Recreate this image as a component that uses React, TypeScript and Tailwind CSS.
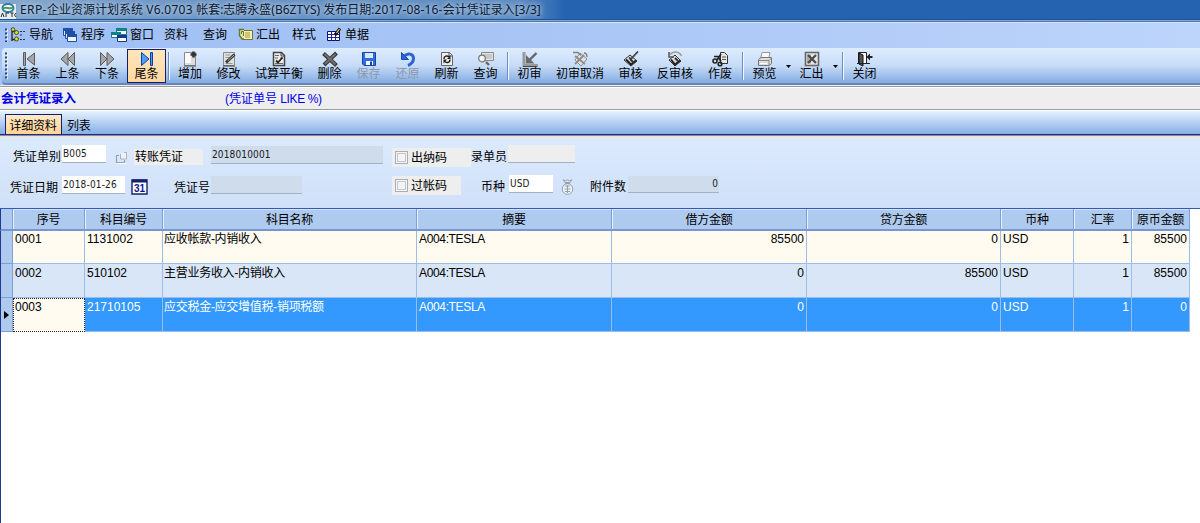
import React from "react";
import clsx from "clsx";

const icons: Record<string, React.ReactNode> = {
  first: (
    <g fill="#a6a6a6" stroke="#5a5a5a">
      <path d="M2.5 1.500h2v13h-2z" />
      <path d="M13.500 2v12L6 8z" />
    </g>
  ),
  prev: (
    <g fill="#a6a6a6" stroke="#5a5a5a">
      <path d="M8 1.500v13L1 8z" />
      <path d="M14.500 1.500v13L8 8z" />
    </g>
  ),
  next: (
    <g fill="#a6a6a6" stroke="#5a5a5a">
      <path d="M1.500 1.500v13L8 8z" />
      <path d="M8 1.500v13L15 8z" />
    </g>
  ),
  last: (
    <g fill="#4d9bff" stroke="#0a3fa8">
      <path d="M2.500 1.500v13L10 8z" />
      <path d="M11.500 1.500h2v13h-2z" />
    </g>
  ),
  add: (
    <g>
      <path d="M2.500 1.500h11v13h-11z" fill="#dcdcdc" stroke="#8a8a8a" />
      <path d="M3 2h6v10H3z" fill="#fafafa" />
      <path d="M2 15h12" stroke="#555" />
      <path d="M11.500 .5v6M8.500 3.500h6" stroke="#333" strokeWidth="2.600" />
    </g>
  ),
  edit: (
    <g>
      <path d="M2.500 1.500h11v13h-11z" fill="#e0e0e0" stroke="#8a8a8a" />
      <path d="M4.500 4h5M4.500 6.500h4M4.500 12.500h7" stroke="#999" />
      <path d="M5 11.500 13.500 3.500" stroke="#3a3a3a" strokeWidth="3" />
      <path d="M7 9.500 13 4" stroke="#aaa" />
      <path d="M2 15h12" stroke="#444" />
    </g>
  ),
  check: (
    <g>
      <path d="M2.500 1.500h8l3 3v10h-11z" fill="#ececec" stroke="#444" strokeWidth="1.500" />
      <path d="M10 1v4h4" fill="none" stroke="#444" />
      <path d="M4 4.500h4M4 7h3M9 7h3M4 12.500h8" stroke="#666" />
      <path d="m5 9.500 2 2 4.500-5" fill="none" stroke="#222" strokeWidth="1.800" />
    </g>
  ),
  remove: (
    <g>
      <path d="m1.500 2.500 13 12M14.500 2 2 14" stroke="#3a3a3a" strokeWidth="4" />
      <path d="m2.500 3 11 10.500M13.500 3 3 13" stroke="#707070" strokeWidth="1.800" />
    </g>
  ),
  save: (
    <g>
      <path d="M1.500 1.500h13v13H3l-1.500-1.500z" fill="#2d6ddf" stroke="#1745a5" />
      <path d="M4 2h8v5H4z" fill="#d9e8fb" />
      <path d="M5 10h7v4H5z" fill="#f5f9ff" />
      <path d="M9 10.500h2V14H9z" fill="#1745a5" />
    </g>
  ),
  undo: (
    <g fill="none" stroke="#2b63d2">
      <path d="M4 5.500C8 1 13.500 3 13.500 7.500c0 3-2 5.500-5.500 7" strokeWidth="3" />
      <path d="M1.500 1.500v7h7z" fill="#2b63d2" stroke="#1b4db5" />
    </g>
  ),
  refresh: (
    <g>
      <path d="M2.500 1.500h8l3 3v10h-11z" fill="#eee" stroke="#666" />
      <path d="M10 1.500v3.500h3.500" fill="none" stroke="#555" />
      <path d="M5 8c0-3 3-4 5-2M11 8.500c0 3-3 4-5 2" fill="none" stroke="#222" strokeWidth="1.500" />
      <path d="M11.500 4v4H8zM4.500 12.500v-4H8z" fill="#222" />
    </g>
  ),
  search: (
    <g>
      <path d="M3.500 1.500h12v8h-12z" fill="#e4e4e4" stroke="#888" />
      <path d="M5 3h9v5H5z" fill="#c8c8c8" />
      <circle cx="4" cy="7.500" r="3.300" fill="#f5f5f5" stroke="#777" strokeWidth="1.200" />
      <path d="m8 11 3 3" stroke="#666" strokeWidth="2.400" />
    </g>
  ),
  audit: (
    <g>
      <path d="M2 1v13.500h14" fill="none" stroke="#9a9a9a" strokeWidth="3" />
      <path d="m14.500 2-8 8" stroke="#666" strokeWidth="2.400" />
      <path d="M4 4v8.500h8.500z" fill="#6a6a6a" />
      <path d="M1 15.500h14" stroke="#444" />
    </g>
  ),
  auditCancel: (
    <g>
      <path d="m3 9 5-7 7 6-6 7z" fill="#e2e2e2" stroke="#8a8a8a" />
      <path d="M1 1.500h5l3 3M12 2c2 0 3 2 3 4" stroke="#808080" strokeWidth="1.400" />
      <path d="M3 5 13 13M12 4 3 13" stroke="#8c8c8c" strokeWidth="1.800" />
    </g>
  ),
  stamp: (
    <g>
      <path d="m1 9 6-5 7 6-6 5z" fill="#ddd" stroke="#333" />
      <path d="m3 8.500 5 5 5-4" fill="none" stroke="#222" strokeWidth="2" />
      <path d="M15 .500 8 8 6 6.500" fill="none" stroke="#444" strokeWidth="1.800" />
      <path d="m7 8 3 3" stroke="#333" strokeWidth="2" />
    </g>
  ),
  unstamp: (
    <g>
      <path d="m2 9 6-5 6 6-6 5z" fill="#ddd" stroke="#333" />
      <path d="m4 8.500 4 5 5-4" fill="none" stroke="#222" strokeWidth="2" />
      <path d="M3 3.500C6 0 12 0 14.500 5" fill="none" stroke="#999" strokeWidth="1.500" />
      <path d="M2 1v5h5" fill="none" stroke="#555" strokeWidth="1.500" />
      <path d="m8 7 3 3" stroke="#333" strokeWidth="2" />
    </g>
  ),
  discard: (
    <g>
      <path d="M8.500 1.500h4l3 3v8h-7z" fill="#e5e5e5" stroke="#333" />
      <path d="M10 6h4M10 8.500h4" stroke="#555" />
      <circle cx="3" cy="10" r="2" fill="none" stroke="#222" strokeWidth="1.600" />
      <circle cx="8" cy="13" r="1.800" fill="none" stroke="#222" strokeWidth="1.600" />
      <path d="M2 5.500h4l3 5M5 9l4-6" stroke="#222" strokeWidth="1.600" />
    </g>
  ),
  print: (
    <g>
      <path d="M5 1.500h8L11.500 8H3.500z" fill="#fafafa" stroke="#999" />
      <path d="m1.500 8.500 2.500-2h10.500v6L12 14.500H1.500z" fill="#ddd" stroke="#777" />
      <path d="M1.500 9.500H12v5M12 9.500l2.500-2.500" fill="none" stroke="#888" />
      <path d="M3 12.500h7" stroke="#fff" />
    </g>
  ),
  sheet: (
    <g>
      <path d="M1.500 1.500h13v13h-13z" fill="#e5e5e5" stroke="#666" strokeWidth="1.600" />
      <path d="M3 3.500h4v9H3z" fill="#aaa" />
      <path d="m4 4 8 8M12 4 4 12" stroke="#4a4a4a" strokeWidth="2.200" />
    </g>
  ),
  exit: (
    <g>
      <path d="M1.500 1.500h8v11h-8z" fill="#fff" stroke="#222" />
      <path d="m2 2 4 2v11l-4-2z" fill="#555" stroke="#111" />
      <path d="M0 12.500h13" stroke="#222" />
      <path d="M15.500 6h-4" stroke="#222" strokeWidth="2" />
      <path d="M9.500 6 13 2.500v7z" fill="#222" />
    </g>
  ),
  tree: (
    <g>
      <path d="M2 1v13M2 4.500h4M2 12.500h4" stroke="#222" strokeWidth="1.300" />
      <path d="M10 4.500h5M10 8h3M10 12.500h5" stroke="#333" strokeDasharray="2 1" />
      <g fill="#d3e02c" stroke="#3c4416" strokeWidth=".9">
        <circle cx="3" cy="2.500" r="1.800" />
        <circle cx="6.500" cy="5.500" r="2" />
        <circle cx="6.500" cy="12" r="2" />
      </g>
    </g>
  ),
  windows: (
    <g stroke="#1f50a5">
      <path d="M1.500 1.500h9v7h-9z" fill="#d8e8fb" />
      <path d="M1 2.500h10" strokeWidth="3" />
      <path d="M3.500 4.500h9v7h-9z" fill="#d8e8fb" />
      <path d="M3 5.500h10" strokeWidth="3" />
      <path d="M5.500 7.500h9v7h-9z" fill="#eef5ff" />
      <path d="M5 8.500h10" strokeWidth="3" />
    </g>
  ),
  cascade: (
    <g>
      <path d="M5.500 1.500h10v6h-10z" fill="#fff" stroke="#147d83" />
      <path d="M5 2.500h11" stroke="#0c8288" strokeWidth="3" />
      <path d="M.5 5.500h9v5h-9z" fill="#fff" stroke="#147d83" />
      <path d="M0 6.500h10" stroke="#0c8288" strokeWidth="3" />
      <path d="M6.500 8.500h9v6h-9z" fill="#fff" stroke="#153c8b" />
      <path d="M6 9.500h10" stroke="#153c8b" strokeWidth="3" />
    </g>
  ),
  exportNote: (
    <g>
      <path d="M5.500 3.500h10v9h-10z" fill="#f5efa8" stroke="#77733b" />
      <path d="M8 6h5M8 8h5M8 10h5" stroke="#a49d4c" />
      <path d="M7 2.500H2.500v6L5 12h2" fill="#dce8a0" stroke="#6c7434" strokeWidth="1.400" />
      <path d="M4.500 7V4.500h2V9" fill="none" stroke="#6c7434" />
    </g>
  ),
  gridPen: (
    <g>
      <path d="M1.500 4.500h12v9h-12z" fill="#fff" stroke="#11116b" />
      <path d="M1 7.500h13M1 10.500h13M5.500 4v10M9.500 4v10" stroke="#20209a" />
      <path d="M9 8 14 1.500" stroke="#111" strokeWidth="3" />
      <path d="m10.500 6 3-4" stroke="#e8d550" strokeWidth="1.200" />
    </g>
  ),
};

const Icon = ({ name, className = "size-4" }: { name: string; className?: string }) => (
  <svg viewBox="0 0 16 16" className={clsx("shrink-0", className)} fill="none">
    {icons[name]}
  </svg>
);

const Grip = ({ className }: { className: string }) => (
  <svg viewBox="0 0 3 30" className={clsx("w-[3px] shrink-0", className)} preserveAspectRatio="xMidYMin slice">
    <path d="M2 1.500v29" stroke="#fff" strokeWidth="2" strokeDasharray="2 2" />
    <path d="M1 .5v29" stroke="#27417d" strokeWidth="2" strokeDasharray="2 2" />
  </svg>
);

const TitleBar = () => (
  <div className="flex h-[19px] shrink-0 items-center bg-[linear-gradient(90deg,#86a9cc_0,#7299c6_120px,#6590c2_350px,#5f8dc1_520px,#2563b1_565px,#2563b1_100%)] font-['Noto_Sans','Noto_Sans_CJK_SC',sans-serif]">
    <svg viewBox="0 0 17 18" className="h-[18px] w-[17px] shrink-0">
      <path d="M0 3h16v15H0z" fill="#e6eef2" />
      <ellipse cx="8" cy="7" rx="5.500" ry="4" fill="#fff" stroke="#2f7fae" strokeWidth="2" />
      <path d="M3 8c3-4 7 2 10-2" fill="none" stroke="#4c9a54" strokeWidth="2" />
      <path d="M1 16l1.500-4L4 16M6 12v4M6 12h3M10.500 12h3M12 12v4M16 12l-1.500 2 1.500 2" fill="none" stroke="#333" />
    </svg>
    <span className="ml-[3px] whitespace-pre text-[12px] leading-[18px] text-[#0b1a33] [text-shadow:0_0_4px_#c5d8ec,0_0_6px_#b4cce6]">
      <span className="tracking-[0.4px]">ERP-</span>企业资源计划系统
      <span className="tracking-[0.25px]"> V6.0703 </span>帐套:志腾永盛
      <span>(B6ZTYS) </span>发布日期:<span className="tracking-[0.15px]">2017-08-16-</span>会计凭证录入
      <span>[3/3]</span>
    </span>
  </div>
);

const menus = [
  { label: "导航", icon: "tree", box: "w-[52px]" },
  { label: "程序", icon: "windows", box: "w-[49px]" },
  { label: "窗口", icon: "cascade", box: "w-[53px]" },
  { label: "资料", box: "w-[39px]" },
  { label: "查询", box: "w-[34px]" },
  { label: "汇出", icon: "exportNote", box: "w-[55px]" },
  { label: "样式", box: "w-[34px]" },
  { label: "单据", icon: "gridPen", box: "w-[44px]" },
];

const MenuBar = () => (
  <div className="flex h-[25px] shrink-0 items-center bg-[linear-gradient(90deg,#9fbff5,#a8c5f5_45%,#bdd5fb)] pb-px pl-[5px] text-[12px]">
    <Grip className="h-[14px]" />
    <div className="ml-[2px] flex">
      {menus.map((m) => (
        <div key={m.label} className={clsx("flex shrink-0 items-center gap-[3px]", m.box)}>
          {m.icon && <Icon name={m.icon} className="size-[16px]" />}
          <span>{m.label}</span>
        </div>
      ))}
    </div>
  </div>
);

type Tool = {
  label?: string;
  icon?: string;
  box: string;
  disabled?: boolean;
  active?: boolean;
  kind?: "sep" | "arrow";
};

const tools: Tool[] = [
  { label: "首条", icon: "first", box: "w-[39px]" },
  { label: "上条", icon: "prev", box: "w-[39px]" },
  { label: "下条", icon: "next", box: "w-[40px]" },
  { label: "尾条", icon: "last", box: "w-[39px]", active: true },
  { kind: "sep", box: "w-[5px]" },
  { label: "增加", icon: "add", box: "w-[38px]" },
  { label: "修改", icon: "edit", box: "w-[39px]" },
  { label: "试算平衡", icon: "check", box: "w-[62px]" },
  { label: "删除", icon: "remove", box: "w-[39px]" },
  { label: "保存", icon: "save", box: "w-[39px]", disabled: true },
  { label: "还原", icon: "undo", box: "w-[39px]", disabled: true },
  { label: "刷新", icon: "refresh", box: "w-[39px]" },
  { label: "查询", icon: "search", box: "w-[39px]" },
  { kind: "sep", box: "w-[5px]" },
  { label: "初审", icon: "audit", box: "w-[39px]" },
  { label: "初审取消", icon: "auditCancel", box: "w-[62px]" },
  { label: "审核", icon: "stamp", box: "w-[39px]" },
  { label: "反审核", icon: "unstamp", box: "w-[50px]" },
  { label: "作废", icon: "discard", box: "w-[40px]" },
  { kind: "sep", box: "w-[5px]" },
  { label: "预览", icon: "print", box: "w-[39px]" },
  { kind: "arrow", box: "w-[8px]" },
  { label: "汇出", icon: "sheet", box: "w-[39px]" },
  { kind: "arrow", box: "w-[9px]" },
  { kind: "sep", box: "w-[5px]" },
  { label: "关闭", icon: "exit", box: "w-[39px]" },
];

const ToolItem = ({ tool }: { tool: Tool }) => {
  if (tool.kind === "sep") {
    return (
      <div className={clsx("flex shrink-0 justify-center pt-[3px]", tool.box)}>
        <div className="h-7 w-px bg-[#6a8ccb]" />
        <div className="h-7 w-px bg-[#f4f9ff]" />
      </div>
    );
  }
  if (tool.kind === "arrow") {
    return (
      <div className={clsx("flex shrink-0 justify-center pt-4", tool.box)}>
        <svg viewBox="0 0 5 3" className="h-[3px] w-[5px]">
          <path d="M0 0h5L2.500 3z" fill="#000" />
        </svg>
      </div>
    );
  }
  return (
    <div
      className={clsx(
        "flex h-[34px] shrink-0 flex-col items-center border pt-px",
        tool.box,
        tool.active ? "border-[#10206f] bg-linear-to-b from-[#ffe6bd] to-[#ffd7a0]" : "border-transparent",
      )}
    >
      <Icon name={tool.icon!} />
      <span className={clsx("whitespace-nowrap leading-[15px]", tool.disabled && "text-[#8e99ab]")}>{tool.label}</span>
    </div>
  );
};

const ToolBar = () => (
  <div className="h-[37px] shrink-0 bg-[#a5c3f3] pl-[2px]">
    <div className="flex h-full rounded-l border-b-2 border-[#6b84be] bg-linear-to-b from-[#deecff] via-[#c7dcf7] via-50% to-[#83ace2] pl-[3px] pt-px text-[12px]">
      <Grip className="mt-[3px] h-[27px]" />
      <div className="ml-px flex">
        {tools.map((t, i) => (
          <ToolItem key={i} tool={t} />
        ))}
      </div>
    </div>
  </div>
);

const InfoBar = () => (
  <div className="flex h-[24px] shrink-0 items-center border-y border-[#9a9a9a] bg-[#eeeeee] pt-[2px] text-[12px] text-[#0000e8] shadow-[inset_0_1px_0_#fff]">
    <span className="w-[225px] pl-px text-[12.5px] font-bold">会计凭证录入</span>
    <span>
      (凭证单号 <span className="tracking-[-0.4px]">LIKE %)</span>
    </span>
  </div>
);

const TabStrip = () => (
  <div className="flex h-[24px] shrink-0 items-end border-b border-[#1d2c7c] bg-linear-to-b from-[#e6f2fe] to-[#86aee5] pl-[5px] text-[12px]">
    <div className="flex h-[20px] w-[57px] items-center justify-center border border-b-0 border-[#10206f] bg-linear-to-b from-[#ffe9c6] to-[#ffd394] pr-px pt-[2px]">
      <span className="tracking-[-0.3px]">详细资料</span>
    </div>
    <div className="flex h-[20px] items-center pl-[5px] pt-[3px] tracking-[-0.3px]">列表</div>
  </div>
);

const Field = ({ className, value, plain }: { className: string; value?: string; plain?: boolean }) => (
  <div
    className={clsx(
      "h-[18px] shrink-0 border-b border-[#a3b1c4] px-px font-['DejaVu_Sans_Condensed','Liberation_Sans',sans-serif] text-[10px] leading-[17px] tracking-[0.15px] text-[#1a1a1a]",
      plain ? "bg-white" : "bg-[#cfdcec]",
      className,
    )}
  >
    {value}
  </div>
);

const CheckPanel = ({ label, className }: { label: string; className: string }) => (
  <div className={clsx("flex h-[19px] shrink-0 items-center bg-[#eeeeee] pl-[3px]", className)}>
    <div className="flex size-[13px] items-center justify-center border border-[#a9aeb8] bg-[#f4f4f4]">
      <div className="size-[9px] border border-[#c3c7ce]" />
    </div>
    <span className="ml-[3px] pt-px">{label}</span>
  </div>
);

const CalendarIcon = () => (
  <svg viewBox="0 0 17 16" className="ml-[6px] mt-1 h-4 w-[17px] shrink-0">
    <path d="M1 1h15v14H1z" fill="#fff" stroke="#14206e" strokeWidth="1.400" />
    <path d="M1 2h15" stroke="#14206e" strokeWidth="3" />
    <text x="8.500" y="13" textAnchor="middle" fontSize="10" fontWeight="bold" fill="#14148a" fontFamily="Liberation Sans, sans-serif">
      31
    </text>
  </svg>
);

const MoneyBagIcon = () => (
  <svg viewBox="0 0 15 16" className="ml-[7px] mt-1 h-4 w-[15px] shrink-0" fill="none" stroke="#94a0ad">
    <path d="M3 .8 5 3.500h5l2-2.700-2.500 1L7.500.8l-2 1z" fill="#dce5ee" />
    <path d="M5 4.500h5" strokeWidth="1.500" />
    <circle cx="7.500" cy="10" r="5.300" fill="#edf2f7" />
    <path d="M5 7h5M7.500 6v8M4.500 10h6M5 12.500h5" />
  </svg>
);

const VoucherForm = () => (
  <div className="h-[72px] shrink-0 border-t border-[#f2e3c4] bg-linear-to-b from-[#dceafd] to-[#cfe0f8] text-[12px] leading-4">
    <div className="flex h-[31px] pt-2">
      <span className="ml-[13px] mt-[4px] w-[49px] shrink-0">凭证单别</span>
      <Field className="w-[44px]" value="B005" plain />
      <svg viewBox="0 0 13 13" className="ml-[9px] mt-[6px] size-[13px] shrink-0" fill="none">
        <path d="M4 4.500H1.500v7h8V9" stroke="#98a2af" strokeWidth="1.200" />
        <path d="M5.500 3v5h6V1.500H9" stroke="#a9b2bd" fill="#eef2f7" />
        <path d="M2.500 12.500h9" stroke="#fff" />
      </svg>
      <div className="ml-[6px] mt-[4px] h-4 w-[69px] shrink-0 bg-[#eeeeee] pl-px leading-[17px]">转账凭证</div>
      <Field className="ml-2 mt-px w-[172px]" value="2018010001" />
      <CheckPanel className="ml-[9px] mt-[3px] w-[79px]" label="出纳码" />
      <span className="mt-1 w-[37px] shrink-0">录单员</span>
      <Field className="w-[67px] bg-[#eeeeee]!" />
    </div>
    <div className="flex pt-[7px]">
      <span className="ml-[10px] mt-[5px] w-[52px] shrink-0">凭证日期</span>
      <Field className="mt-px w-[63px]" value="2018-01-26" plain />
      <CalendarIcon />
      <span className="ml-[26px] mt-[5px] w-[37px] shrink-0">凭证号</span>
      <Field className="mt-px w-[91px]" />
      <CheckPanel className="ml-[90px] mt-px w-[69px]" label="过帐码" />
      <span className="ml-5 mt-1 w-[28px] shrink-0">币种</span>
      <Field className="w-[44px]" value="USD" plain />
      <MoneyBagIcon />
      <span className="ml-[15px] mt-[4px] w-[38px] shrink-0">附件数</span>
      <Field className="mt-px h-[17px]! w-[91px] text-right leading-[16px]!" value="0" />
    </div>
  </div>
);

const columns = [
  { title: "序号" },
  { title: "科目编号" },
  { title: "科目名称", cell: "tracking-[-0.28px] pl-px!" },
  { title: "摘要", cell: "tracking-[-0.35px]" },
  { title: "借方金额", cell: "text-right" },
  { title: "贷方金额", cell: "text-right" },
  { title: "币种" },
  { title: "汇率", cell: "text-right" },
  { title: "原币金额", cell: "text-right" },
];

const rows = [
  ["0001", "1131002", "应收帐款-内销收入", "A004:TESLA", "85500", "0", "USD", "1", "85500"],
  ["0002", "510102", "主营业务收入-内销收入", "A004:TESLA", "0", "85500", "USD", "1", "85500"],
  ["0003", "21710105", "应交税金-应交增值税-销项税额", "A004:TESLA", "0", "0", "USD", "1", "0"],
];

const gridCols = "grid w-[1190px] grid-cols-[12px_72px_78px_254px_195px_195px_194px_73px_58px_58px] border-l border-l-[#20398f]";

const EntryGrid = () => (
  <div className="flex min-h-0 flex-1 flex-col border-t border-[#3459b0] bg-white text-[12px]">
    <div className={clsx(gridCols, "h-[22px] shrink-0 border-b-2 border-b-[#7795d3] bg-[#afcaef]")}>
      <div className="border-r border-[#7f9fd6]" />
      {columns.map((c) => (
        <div
          key={c.title}
          className="flex items-center justify-center border-r border-[#7f9fd6] pt-[2px] shadow-[inset_1px_0_0_#e6f0fd,inset_0_1px_0_#d3e3f8]"
        >
          <span className="whitespace-nowrap tracking-[-0.2px]">{c.title}</span>
        </div>
      ))}
    </div>
    {rows.map((row, r) => {
      const selected = r === 2;
      return (
        <div
          key={row[0]}
          className={clsx(
            gridCols,
            "shrink-0",
            r === 0 && "h-[33px] bg-[#fffbf0]",
            r === 1 && "h-[34px] bg-[#d8e6f7]",
            selected && "h-[34px] bg-[#3399ff] text-white",
          )}
        >
          <div className="flex items-center justify-center border-b border-r border-[#7f9fd6] bg-[#afcaef]">
            {selected && (
              <svg viewBox="0 0 5 8" className="h-2 w-[5px]">
                <path d="M0 0v8l5-4z" fill="#000" />
              </svg>
            )}
          </div>
          {row.map((cell, c) => (
            <div
              key={c}
              className={clsx(
                "whitespace-nowrap px-[2px]",
                r === 0 ? "leading-[17px]" : "leading-[19px]",
                columns[c].cell,
                selected && c === 0
                  ? "border border-dotted border-[#222] bg-[#fffbf0] pl-px! leading-[17px]! text-black"
                  : "border-b border-r border-[#9dbde8]",
              )}
            >
              {cell}
            </div>
          ))}
        </div>
      );
    })}
    <div className="flex-1 border-l border-[#20398f]" />
  </div>
);

const App: React.FC = () => {
  return (
    <div className="flex h-[523px] w-[1200px] flex-col overflow-hidden bg-white font-['Liberation_Sans','Noto_Sans_CJK_SC',sans-serif] text-black">
      <TitleBar />
      <div className="h-[3px] shrink-0 border-b border-t border-b-[#557ba8] border-t-[#1f5596] bg-[#7da5d6]" />
      <div className="h-px shrink-0 bg-[#d5e4f8]" />
      <MenuBar />
      <ToolBar />
      <div className="h-px shrink-0 bg-[#eeeeee]" />
      <InfoBar />
      <div className="h-px shrink-0 bg-white" />
      <TabStrip />
      <div className="h-px shrink-0 bg-[#8f86a8]" />
      <VoucherForm />
      <EntryGrid />
    </div>
  );
};

export default App;
